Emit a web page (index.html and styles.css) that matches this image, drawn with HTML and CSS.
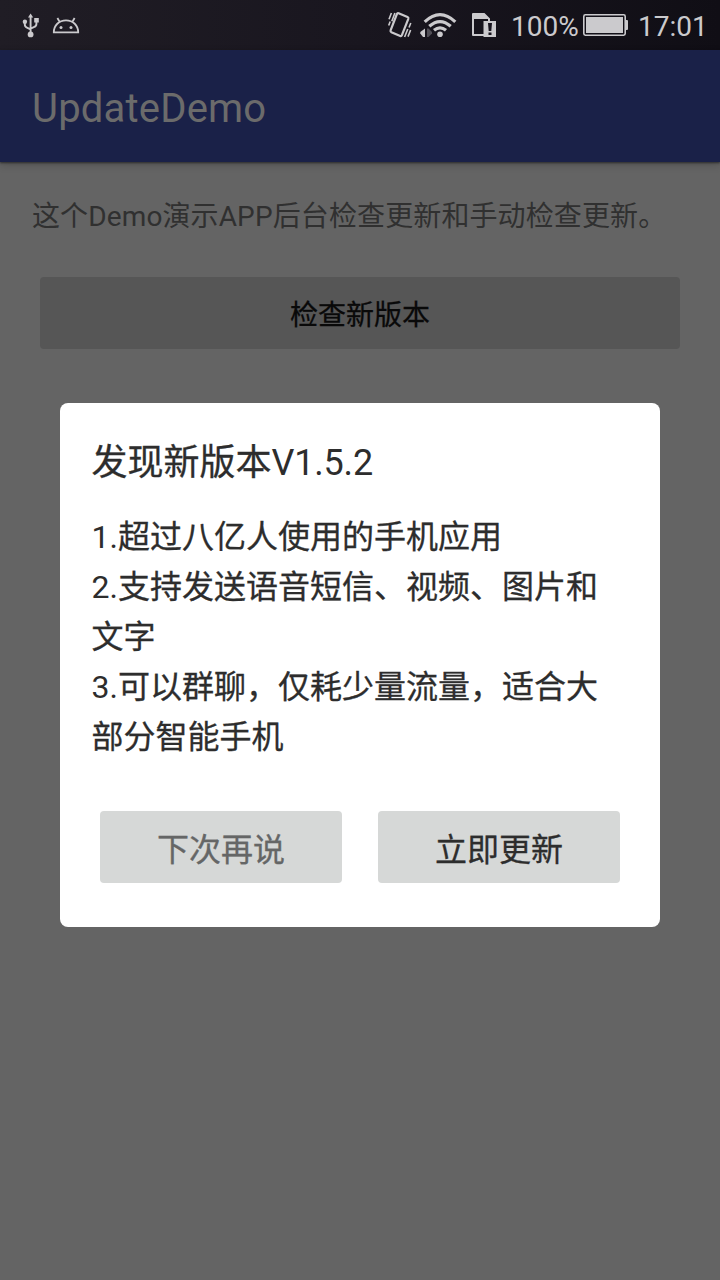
FILE: index.html
```html
<!DOCTYPE html>
<html lang="zh-CN">
<head>
<meta charset="utf-8">
<title>UpdateDemo</title>
<link rel="stylesheet" href="styles.css">
</head>
<body>
<div class="screen">
  <header class="status-bar">
    <svg class="icon-usb" width="18" height="26" viewBox="0 0 18 26" fill="none" stroke="#cbcacd" stroke-width="1.9">
      <path d="M8.6 20V4M2.8 9v2.5q0 2.4 2.6 3.3l3.2 1.6M14.4 8.500v2.600q0 2.300-2.600 3.100l-3.200 1.400"/>
      <path d="M8.6 .4 11.200 4.500H6zM12.200 5h4.600v4.600h-4.600z" fill="#cbcacd" stroke="none"/>
      <circle cx="2.900" cy="8.700" r="2.200" fill="#cbcacd" stroke="none"/>
      <circle cx="8.600" cy="21.400" r="2.900" fill="#cbcacd" stroke="none"/>
    </svg>
    <svg class="icon-android" width="28" height="18" viewBox="0 0 28 18" fill="none" stroke="#cbcacd" stroke-width="1.800">
      <path d="M1.800 15.400C1.800 8.500 7 3.300 14 3.300s12.200 5.200 12.200 12.100zM7.700 5 5.400 1M20.300 5l2.300-4"/>
      <circle cx="9" cy="10.400" r="1.500" fill="#cbcacd" stroke="none"/>
      <circle cx="19" cy="10.400" r="1.500" fill="#cbcacd" stroke="none"/>
    </svg>
    <span class="spacer"></span>
    <svg class="icon-vibrate" width="24" height="28" viewBox="0 0 24 28" fill="none" stroke="#cbcacd" stroke-width="2.200">
      <path d="M10.600 2.200 19.500 6q1.200.6.800 1.800l-6.400 16.400q-.5 1.200-1.700.8L3.400 21.200q-1.200-.6-.8-1.800L8.900 3q.5-1.200 1.700-.8z"/>
      <path d="M1 8.200 3.400 2M3.800 10.200 6.900 2M.7 14.500 2.200 10.500M16.600 26l3.200-8M20 25.600l2.600-6.600M21 16.500l1.800-4.500" stroke-width="1.600"/>
    </svg>
    <svg class="icon-wifi" width="37" height="28" viewBox="0 0 37 28" fill="none" stroke="#cbcacd" stroke-width="3.200">
      <path d="M4.700 9.800Q20-4.600 35.300 9.800M9.300 14.300q10.700-9.400 21.400 0M14 18.300q6-5 12 0"/>
      <circle cx="20" cy="22.300" r="2.800" fill="#cbcacd" stroke="none"/>
      <path d="M5 16.500v8.500H3L.3 21.500v-1.500z" fill="#cbcacd" stroke="none"/>
      <path d="M7 16.500v8.500h1.500l3.500-3.500v-1.500L8.500 16.500z" fill="#504e56" stroke="none"/>
    </svg>
    <svg class="icon-sim" width="26" height="26" viewBox="0 0 26 26">
      <path d="M0 23V2q0-1 1-1h11.500L18 6.500V9h-2V7H2v15h10v2H1q-1 0-1-1z" fill="#cbcacd"/>
      <path d="M11.500 9H24v16H11.500z" fill="#cbcacd"/>
      <path d="M16 11h4l-.7 8h-2.600zM16.500 20.500h3v2.500h-3z" fill="#16131d"/>
    </svg>
    <span class="status-text">100%</span>
    <svg class="icon-battery" width="45" height="22" viewBox="0 0 45 22">
      <rect x=".8" y=".8" width="41.400" height="20.400" rx="1.600" fill="none" stroke="#cbcacd" stroke-width="1.600"/>
      <path d="M3 3h37v16H3zM42 6h2q1 0 1 1v8q0 1-1 1h-2z" fill="#cbcacd"/>
    </svg>
    <span class="status-text clock">17:01</span>
  </header>
  <div class="app-bar">UpdateDemo</div>
  <main class="content">
    <p class="intro">这个Demo演示APP后台检查更新和手动检查更新。</p>
    <div class="button button-check">检查新版本</div>
  </main>
  <section class="dialog">
    <h1 class="dialog-title">发现新版本<span class="latin">V1.5.2</span></h1>
    <p class="notes"><span class="latin">1.</span>超过八亿人使用的手机应用<br><span class="latin">2.</span>支持发送语音短信、视频、图片和文字<br><span class="latin">3.</span>可以群聊，仅耗少量流量，适合大部分智能手机</p>
    <div class="actions">
      <div class="button button-later">下次再说</div>
      <div class="button button-update">立即更新</div>
    </div>
  </section>
</div>
</body>
</html>
```

FILE: styles.css
```css
* {
  box-sizing: border-box;
}

body {
  margin: 0;
  font-family: Roboto, "Noto Sans CJK SC", sans-serif;
}

.screen {
  position: relative;
  display: flex;
  flex-direction: column;
  width: 720px;
  height: 1280px;
  overflow: hidden;
  background: #646464;
}

.status-bar {
  display: flex;
  align-items: flex-start;
  height: 50px;
  flex: none;
  padding: 0 13px 0 22px;
  background: linear-gradient(90deg, #201d25, #19161f 50%, #100e15);
}

.status-bar svg {
  flex: none;
}

.icon-usb { margin-top: 13px; }
.icon-android { margin: 17px 0 0 12px; }
.spacer { flex: 1; }
.icon-vibrate { margin: 11px 8px 0 0; }
.icon-wifi { margin: 12px 15px 0 0; }
.icon-sim { margin: 12px 13px 0 0; }

.status-text {
  color: #cbcacd;
  font-size: 28px;
  line-height: 54px;
  width: 69px;
  white-space: nowrap;
}

.icon-battery { margin: 14px 10px 0 3px; }

.app-bar {
  position: relative;
  flex: none;
  height: 112px;
  padding-left: 32px;
  background: #1a2148;
  color: #6b6b6b;
  font-size: 40px;
  letter-spacing: 0.2px;
  line-height: 118px;
  box-shadow: 0 1px 2px rgba(0, 0, 0, 0.5), 0 3px 8px rgba(0, 0, 0, 0.18);
}

.content {
  padding: 34px 40px 0;
}

.intro {
  margin: 0 -8px;
  color: #303030;
  font-size: 28px;
  letter-spacing: 0.12px;
  line-height: 42px;
  white-space: nowrap;
}

.button {
  display: flex;
  align-items: center;
  justify-content: center;
  height: 72px;
  border-radius: 4px;
  -webkit-text-stroke: 0.3px currentColor;
}

.button-check {
  margin-top: 39px;
  background: #565656;
  color: #090909;
  font-size: 28px;
}

.dialog {
  position: absolute;
  left: 60px;
  top: 403px;
  width: 600px;
  height: 524px;
  padding: 33px 32px 32px;
  border-radius: 8px;
  background: #fff;
  color: #2d2d2d;
}

.dialog-title {
  margin: 0 0 0 -0.5px;
  font-size: 36px;
  font-weight: 400;
  line-height: 54px;
  -webkit-text-stroke: 0.3px currentColor;
}

.latin {
  -webkit-text-stroke: 0;
}

.dialog-title .latin {
  letter-spacing: -0.2px;
}

.notes {
  margin: 22px 0 0 -0.5px;
  font-size: 32px;
  line-height: 50px;
  -webkit-text-stroke: 0.3px currentColor;
}

.actions {
  display: grid;
  grid-template-columns: 1fr 1fr;
  gap: 36px;
  padding: 0 8px;
  margin-top: 49px;
}

.actions .button {
  background: #d6d8d7;
  font-size: 32px;
}

.actions .button-later {
  color: #656666;
}
```
